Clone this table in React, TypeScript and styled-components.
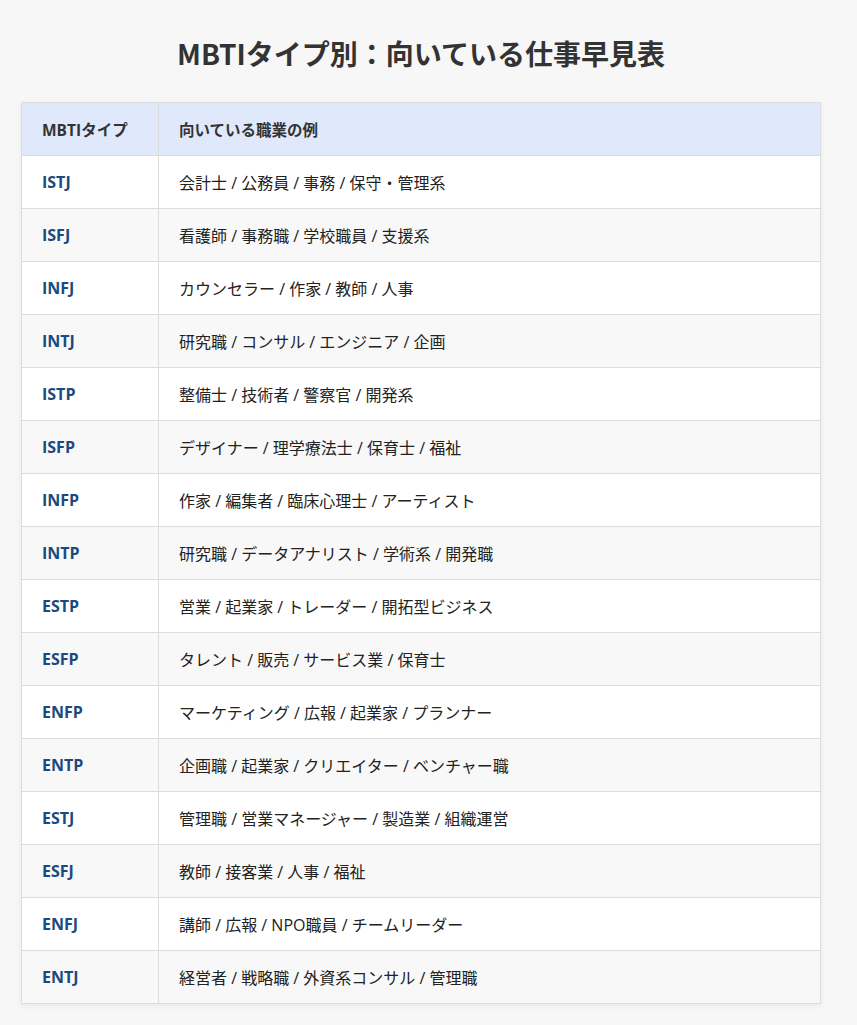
import React from 'react'
import styled, { createGlobalStyle } from 'styled-components'

const GlobalStyle = createGlobalStyle`
  html, body {
    margin: 0;
    padding: 0;
    background: #f7f7f7;
  }
  body {
    font-family: "Open Sans", "Noto Sans CJK JP", sans-serif;
    color: #333;
  }
`

const rows: [string, string][] = [
  ['ISTJ', '会計士 / 公務員 / 事務 / 保守・管理系'],
  ['ISFJ', '看護師 / 事務職 / 学校職員 / 支援系'],
  ['INFJ', 'カウンセラー / 作家 / 教師 / 人事'],
  ['INTJ', '研究職 / コンサル / エンジニア / 企画'],
  ['ISTP', '整備士 / 技術者 / 警察官 / 開発系'],
  ['ISFP', 'デザイナー / 理学療法士 / 保育士 / 福祉'],
  ['INFP', '作家 / 編集者 / 臨床心理士 / アーティスト'],
  ['INTP', '研究職 / データアナリスト / 学術系 / 開発職'],
  ['ESTP', '営業 / 起業家 / トレーダー / 開拓型ビジネス'],
  ['ESFP', 'タレント / 販売 / サービス業 / 保育士'],
  ['ENFP', 'マーケティング / 広報 / 起業家 / プランナー'],
  ['ENTP', '企画職 / 起業家 / クリエイター / ベンチャー職'],
  ['ESTJ', '管理職 / 営業マネージャー / 製造業 / 組織運営'],
  ['ESFJ', '教師 / 接客業 / 人事 / 福祉'],
  ['ENFJ', '講師 / 広報 / NPO職員 / チームリーダー'],
  ['ENTJ', '経営者 / 戦略職 / 外資系コンサル / 管理職'],
]

export default function App() {
  return (
    <>
      <GlobalStyle />
      <Div_Page>
        <H1_Title>MBTIタイプ別：向いている仕事早見表</H1_Title>
        <Table_Jobs>
          <thead>
            <tr>
              <Th_Head $first>MBTIタイプ</Th_Head>
              <Th_Head>向いている職業の例</Th_Head>
            </tr>
          </thead>
          <tbody>
            {rows.map(([type, jobs], i) => (
              <Tr_Row key={type} $alt={i % 2 === 1}>
                <Td_Type>{type}</Td_Type>
                <Td_Jobs>{jobs}</Td_Jobs>
              </Tr_Row>
            ))}
          </tbody>
        </Table_Jobs>
      </Div_Page>
    </>
  )
}

const Div_Page = styled.div`
  width: 800px;
  padding: 20px 21px 22px;
`

const H1_Title = styled.h1`
  margin: 12px 0 28px;
  text-align: center;
  font-family: "Noto Sans CJK JP", sans-serif;
  font-size: 28px;
  line-height: 42px;
  font-weight: 700;
  color: #333;
`

const Table_Jobs = styled.table`
  width: 800px;
  border-collapse: collapse;
  background: #fff;
  box-shadow: 0 2px 6px rgba(0, 0, 0, 0.06);
  font-size: 16px;
`

const Th_Head = styled.th<{ $first?: boolean }>`
  background: #e0e9fb;
  text-align: left;
  font-weight: 700;
  font-size: 15.5px;
  color: #333;
  height: 52px;
  padding: 0 20px;
  border: 1px solid #dcdcdc;
  width: ${p => (p.$first ? '96px' : 'auto')};
`

const Tr_Row = styled.tr<{ $alt: boolean }>`
  background: ${p => (p.$alt ? '#f8f8f8' : '#fff')};
`

const Td_Type = styled.td`
  height: 52px;
  padding: 0 20px;
  border: 1px solid #dcdcdc;
  font-weight: 700;
  color: #1b4a80;
  font-size: 16px;
`

const Td_Jobs = styled.td`
  height: 52px;
  padding: 0 20px;
  border: 1px solid #dcdcdc;
  color: #222;
  font-size: 16px;
`
